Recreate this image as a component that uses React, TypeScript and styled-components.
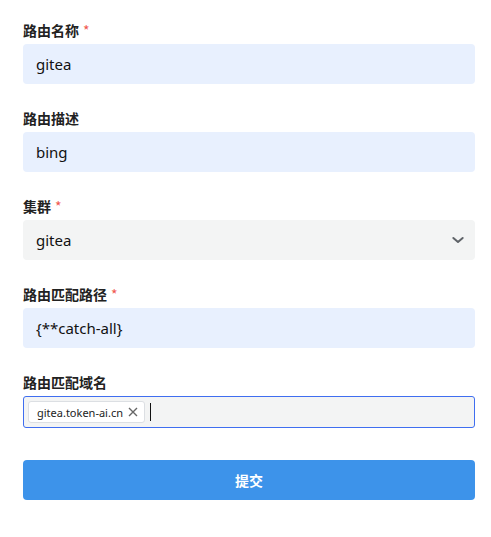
import React from 'react';
import styled, { createGlobalStyle } from 'styled-components';

const GlobalStyle = createGlobalStyle`
  html, body {
    margin: 0;
    padding: 0;
    background: #ffffff;
  }
  body {
    font-family: "Noto Sans", "Noto Sans CJK SC", sans-serif;
    color: #1f2328;
  }
`;

const Form = styled.form`
  display: flex;
  flex-direction: column;
  gap: 24px;
  padding: 20px 16px 0 23px;
`;

const Field = styled.div`
  display: flex;
  flex-direction: column;
  gap: 4px;
`;

const Label = styled.label`
  font-size: 14px;
  line-height: 20px;
  height: 20px;
  font-weight: 700;
  color: #222;
  font-family: "Noto Sans CJK SC", sans-serif;
`;

const Required = styled.span`
  color: #f0574e;
  margin-left: 4px;
  font-weight: 400;
`;

const TextInput = styled.input`
  box-sizing: border-box;
  height: 40px;
  width: 100%;
  border: none;
  border-radius: 4px;
  padding: 0 13px;
  background: #e8f0fe;
  font-family: "Noto Sans", "Noto Sans CJK SC", sans-serif;
  font-size: 15px;
  color: #111;
  outline: none;
`;

const SelectBox = styled.div`
  box-sizing: border-box;
  height: 40px;
  display: flex;
  align-items: center;
  justify-content: space-between;
  padding: 0 9px 0 13px;
  border-radius: 4px;
  background: #f3f4f4;
  font-size: 15px;
  color: #111;
`;

const TagInput = styled.div`
  box-sizing: border-box;
  height: 32px;
  display: flex;
  align-items: center;
  gap: 4px;
  padding: 0 4px;
  border: 1px solid #3f6ef0;
  border-radius: 3px;
  background: #f3f4f4;
`;

const Tag = styled.span`
  display: inline-flex;
  align-items: center;
  gap: 5px;
  height: 22px;
  box-sizing: border-box;
  padding: 0 6px 0 8px;
  background: #ffffff;
  border: 1px solid #dcdfe3;
  border-radius: 3px;
  font-size: 11px;
  color: #222;
`;

const Caret = styled.span`
  width: 1px;
  height: 18px;
  background: #111;
  margin-left: 1px;
`;

const SubmitButton = styled.button`
  margin-top: 8px;
  height: 40px;
  border: none;
  border-radius: 4px;
  background: #3d93ea;
  color: #ffffff;
  font-size: 14px;
  font-weight: 700;
  font-family: "Noto Sans CJK SC", sans-serif;
`;

const Chevron = () => (
  <svg width="16" height="16" viewBox="0 0 24 24" fill="none" stroke="#5f6368" strokeWidth="3" strokeLinecap="round" strokeLinejoin="round">
    <path d="M5 9l7 6 7-6" />
  </svg>
);

const Close = () => (
  <svg width="10" height="10" viewBox="0 0 10 10" stroke="#666" strokeWidth="1.4">
    <path d="M1 1l8 8M9 1l-8 8" />
  </svg>
);

export default function App() {
  return (
    <>
      <GlobalStyle />
      <Form onSubmit={(e) => e.preventDefault()}>
        <Field>
          <Label>路由名称<Required>*</Required></Label>
          <TextInput defaultValue="gitea" />
        </Field>
        <Field>
          <Label>路由描述</Label>
          <TextInput defaultValue="bing" />
        </Field>
        <Field>
          <Label>集群<Required>*</Required></Label>
          <SelectBox>
            <span>gitea</span>
            <Chevron />
          </SelectBox>
        </Field>
        <Field>
          <Label>路由匹配路径<Required>*</Required></Label>
          <TextInput defaultValue="{**catch-all}" />
        </Field>
        <Field>
          <Label>路由匹配域名</Label>
          <TagInput>
            <Tag>
              gitea.token-ai.cn
              <Close />
            </Tag>
            <Caret />
          </TagInput>
        </Field>
        <SubmitButton type="submit">提交</SubmitButton>
      </Form>
    </>
  );
}
